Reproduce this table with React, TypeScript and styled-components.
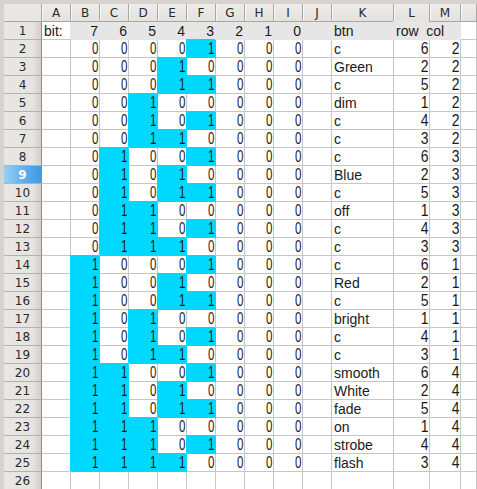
import React from "react";
import styled, { createGlobalStyle, css } from "styled-components";

const GlobalStyle = createGlobalStyle`
  html, body { margin: 0; padding: 0; background: #d6d3ce; overflow: hidden; }
  body { font-family: "Liberation Sans", Arial, sans-serif; }
`;

const GRID = "#c6c6c6";
const CYAN = "#00d8ff";
const ROWGRAY = "#e6e6e6";

const Frame = styled.div`
  padding: 4px 0 0 4px;
  background: #d6d3ce;
  width: 477px;
  height: 489px;
  box-sizing: border-box;
  overflow: hidden;
`;

const Sheet = styled.div`
  display: grid;
  grid-template-columns: 38px repeat(10, 29px) 62px 36px 31px 1fr;
  grid-auto-rows: 18px;
  background: #fff;
`;

const HeaderBase = css`
  position: relative;
  z-index: 1;
  box-sizing: border-box;
  display: flex;
  align-items: center;
  justify-content: center;
  font-family: "DejaVu Sans", sans-serif;
  font-size: 12px;
  color: #2a2a2a;
`;

const Corner = styled.div`
  ${HeaderBase};
  background: #e9e7e4;
  border-right: 1px solid #a8a6a2;
  border-bottom: 1px solid #a8a6a2;
`;

const ColHeader = styled.div`
  ${HeaderBase};
  background: linear-gradient(#eeecea, #e4e2df);
  border-right: 1px solid #a9a7a3;
  border-bottom: 1px solid #a8a6a2;
  box-shadow: inset 1px 0 0 #f7f6f5;
`;

const RowHeader = styled.div<{ $selected?: boolean }>`
  ${HeaderBase};
  border-right: 1px solid #8e8c88;
  border-bottom: 1px solid #b4b2ae;
  background: linear-gradient(90deg, #e9e7e4 0%, #e6e4e1 78%, #d3d0cc 100%);
  ${(p) =>
    p.$selected &&
    css`
      background: linear-gradient(90deg, #97d0f6 0%, #63b1ec 50%, #3c9be4 100%);
      color: #fff;
      font-weight: bold;
    `}
`;

const Cell = styled.div<{ $fill?: string; $align?: "left" | "right"; $over?: boolean }>`
  box-sizing: border-box;
  border-right: 1px solid ${(p) => p.$fill || GRID};
  border-bottom: 1px solid ${(p) => p.$fill || GRID};
  background: ${(p) => p.$fill || "#fff"};
  ${(p) => p.$fill && css`box-shadow: -1px -1px 0 0 ${p.$fill};`}
  ${(p) => p.$over && css`position: relative; z-index: 2;`}
  display: flex;
  align-items: flex-end;
  justify-content: ${(p) => (p.$align === "right" ? "flex-end" : "flex-start")};
  padding: 0 1px 0 2px;
  font-size: 14px;
  line-height: 16px;
  color: #1a1a1a;
  white-space: pre;
  overflow: visible;
`;

const Num = styled.span<{ $wide?: boolean }>`
  display: inline-block;
  font-family: "Liberation Sans", Arial, sans-serif;
  font-size: 17px;
  line-height: 16px;
  transform: scaleX(${(p) => (p.$wide ? 0.82 : 0.68)});
  transform-origin: right center;
`;

const COLS = ["A", "B", "C", "D", "E", "F", "G", "H", "I", "J", "K", "L", "M"];

const rows: [number, string, number, number][] = [
  [1, "c", 6, 2],
  [2, "Green", 2, 2],
  [3, "c", 5, 2],
  [4, "dim", 1, 2],
  [5, "c", 4, 2],
  [6, "c", 3, 2],
  [9, "c", 6, 3],
  [10, "Blue", 2, 3],
  [11, "c", 5, 3],
  [12, "off", 1, 3],
  [13, "c", 4, 3],
  [14, "c", 3, 3],
  [17, "c", 6, 1],
  [18, "Red", 2, 1],
  [19, "c", 5, 1],
  [20, "bright", 1, 1],
  [21, "c", 4, 1],
  [22, "c", 3, 1],
  [25, "smooth", 6, 4],
  [26, "White", 2, 4],
  [27, "fade", 5, 4],
  [28, "on", 1, 4],
  [29, "strobe", 4, 4],
  [30, "flash", 3, 4],
];

export default function App() {
  return (
    <>
      <GlobalStyle />
      <Frame>
        <Sheet>
          <Corner />
          {COLS.map((c) => (
            <ColHeader key={c}>{c}</ColHeader>
          ))}
          <ColHeader />

          {/* row 1 */}
          <RowHeader>1</RowHeader>
          <Cell>bit:</Cell>
          {[7, 6, 5, 4, 3, 2, 1, 0].map((b) => (
            <Cell key={b} $fill={ROWGRAY} $align="right">
              {b}
            </Cell>
          ))}
          <Cell $fill={ROWGRAY} />
          <Cell $fill={ROWGRAY}>btn</Cell>
          <Cell $fill={ROWGRAY} $over>
            {"row  col"}
          </Cell>
          <Cell $fill={ROWGRAY} />
          <Cell />

          {rows.map(([v, name, r, c], i) => {
            const n = i + 2;
            const bits = [4, 3, 2, 1, 0].map((k) => (v >> k) & 1);
            return (
              <React.Fragment key={n}>
                <RowHeader $selected={n === 9}>{n}</RowHeader>
                <Cell />
                {bits.map((b, k) => (
                  <Cell key={k} $fill={b ? CYAN : undefined} $align="right">
                    <Num>{b}</Num>
                  </Cell>
                ))}
                {[0, 1, 2].map((k) => (
                  <Cell key={"z" + k} $align="right">
                    <Num>0</Num>
                  </Cell>
                ))}
                <Cell />
                <Cell>{name}</Cell>
                <Cell $align="right">
                  <Num $wide>{r}</Num>
                </Cell>
                <Cell $align="right">
                  <Num $wide>{c}</Num>
                </Cell>
                <Cell />
              </React.Fragment>
            );
          })}

          <RowHeader>26</RowHeader>
          {COLS.map((c) => (
            <Cell key={c} />
          ))}
          <Cell />
        </Sheet>
      </Frame>
    </>
  );
}
